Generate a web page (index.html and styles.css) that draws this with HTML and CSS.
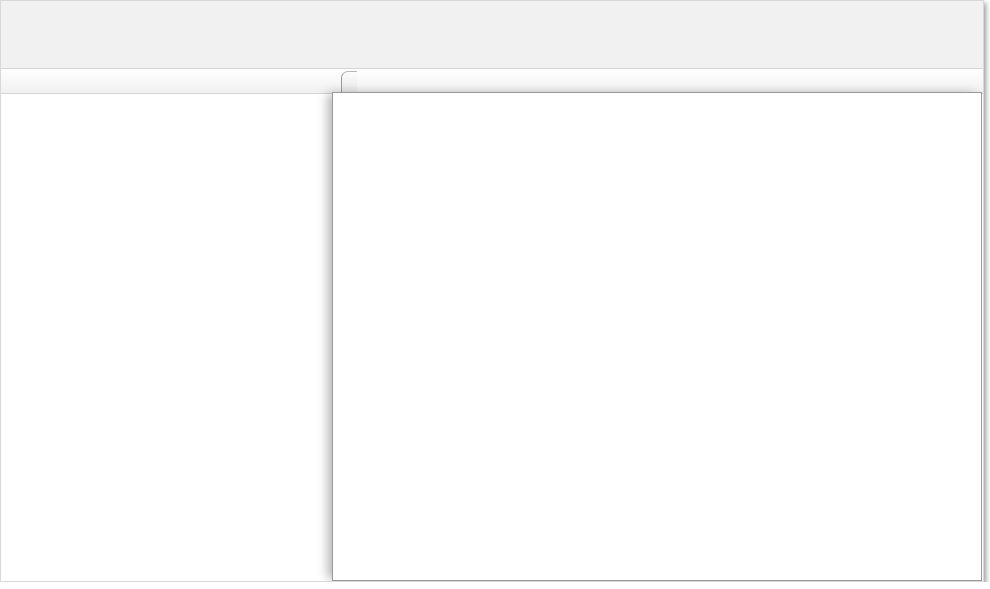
FILE: index.html
```html
<!DOCTYPE html>
<html>
<head>
<meta charset="utf-8">
<link rel="stylesheet" href="styles.css">
</head>
<body>
<div class="window">
  <div class="topbar"></div>
  <div class="tabstrip">
    <div class="tab"></div>
  </div>
  <div class="main">
    <div class="sidebar"></div>
    <div class="panel"></div>
  </div>
</div>
</body>
</html>
```
FILE: styles.css
```css
html, body {
  margin: 0;
  padding: 0;
  background: #ffffff;
  font-family: "Liberation Sans", Arial, sans-serif;
}
.window {
  width: 982px;
  height: 580px;
  border: 1px solid #d8d8d8;
  box-shadow: 2px 3px 5px rgba(0,0,0,0.4);
  display: flex;
  flex-direction: column;
  background: #ffffff;
  overflow: hidden;
}
.topbar {
  height: 67px;
  background: #f1f1f1;
  border-bottom: 1px solid #d4d4d4;
  flex: none;
}
.tabstrip {
  height: 25px;
  flex: none;
  display: flex;
  background: linear-gradient(#ffffff, #f0f0f0);
  border-bottom: 1px solid #d4d4d4;
  padding-left: 340px;
  box-sizing: border-box;
  align-items: flex-end;
}
.tab {
  width: 16px;
  height: 22px;
  border-top: 1px solid #b8b8b8;
  border-left: 1px solid #999999;
  border-top-left-radius: 7px;
  background: linear-gradient(#fdfdfd, #e6e6e6);
  box-sizing: border-box;
}
.main {
  flex: 1;
  display: flex;
  min-height: 0;
}
.sidebar {
  width: 331px;
  flex: none;
  background: #ffffff;
}
.panel {
  flex: none;
  width: 648px;
  margin-top: -2px;
  margin-bottom: 0;
  background: #ffffff;
  border: 1px solid #999999;
  box-shadow: -6px 0 10px -2px rgba(0,0,0,0.3);
}
```
